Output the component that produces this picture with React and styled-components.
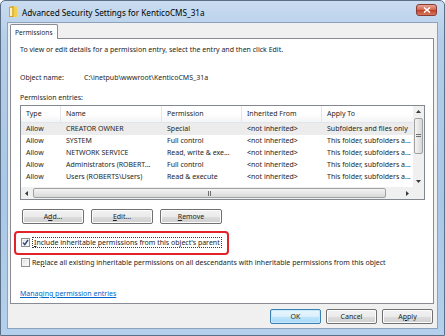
import styled, { createGlobalStyle } from 'styled-components';

const GlobalStyle = createGlobalStyle`
  html, body {
    margin: 0;
    padding: 0;
    background: #ffffff;
  }
  body {
    font-family: "Noto Sans", "Open Sans", sans-serif;
    font-size: 7px;
    color: #1e1e1e;
  }
`;

const entries = [
  { type: 'Allow', name: 'CREATOR OWNER', perm: 'Special', from: '<not inherited>', apply: 'Subfolders and files only' },
  { type: 'Allow', name: 'SYSTEM', perm: 'Full control', from: '<not inherited>', apply: 'This folder, subfolders a...' },
  { type: 'Allow', name: 'NETWORK SERVICE', perm: 'Read, write & exe...', from: '<not inherited>', apply: 'This folder, subfolders a...' },
  { type: 'Allow', name: 'Administrators (ROBERT...', perm: 'Full control', from: '<not inherited>', apply: 'This folder, subfolders a...' },
  { type: 'Allow', name: 'Users (ROBERTS\\Users)', perm: 'Read & execute', from: '<not inherited>', apply: 'This folder, subfolders a...' },
];

function FolderIcon() {
  return (
    <svg width="10" height="13" viewBox="0 0 10 13">
      <path d="M1 2 L5 1 L5 12 L1 12 Z" fill="#d9a520" />
      <path d="M5 1 L9 2 L9 12 L5 12 Z" fill="#f5cf4a" />
      <path d="M2 3 L4.5 2.4 L4.5 11 L2 11 Z" fill="#fff3c0" />
      <path d="M5 1 L5 12" stroke="#b8860b" strokeWidth="0.6" />
    </svg>
  );
}

function CheckMark() {
  return (
    <svg width="7" height="7" viewBox="0 0 7 7">
      <path d="M1 3.6 L2.8 5.6 L6 1" fill="none" stroke="#2b3f78" strokeWidth="1.4" />
    </svg>
  );
}

function Arrow({ dir }) {
  const d = {
    up: 'M0 3 L2.5 0 L5 3 Z',
    down: 'M0 0 L2.5 3 L5 0 Z',
    left: 'M3 0 L0 2.5 L3 5 Z',
    right: 'M0 0 L3 2.5 L0 5 Z',
  }[dir];
  const vertical = dir === 'up' || dir === 'down';
  return (
    <svg width={vertical ? 5 : 3} height={vertical ? 3 : 5} viewBox={vertical ? '0 0 5 3' : '0 0 3 5'}>
      <path d={d} fill="#3a3a3a" />
    </svg>
  );
}

export default function App() {
  return (
    <>
      <GlobalStyle />
      <Window>
        <TitleBar>
          <FolderIcon />
          <Title>Advanced Security Settings for KenticoCMS_31a</Title>
          <CloseButton>
            <svg width="8" height="6" viewBox="0 0 8 6">
              <path d="M1 0.5 L7 5.5 M7 0.5 L1 5.5" stroke="#ffffff" strokeWidth="1.6" />
            </svg>
          </CloseButton>
        </TitleBar>
        <Client>
          <TabStrip>
            <Tab>Permissions</Tab>
          </TabStrip>
          <Panel>
            <Line>To view or edit details for a permission entry, select the entry and then click Edit.</Line>
            <ObjectRow>
              <span>Object name:</span>
              <span>C:\inetpub\wwwroot\KenticoCMS_31a</span>
            </ObjectRow>
            <SectionLabel>Permission entries:</SectionLabel>
            <ListBox>
              <ListContent>
                <HeaderRow>
                  <HeaderCell>Type</HeaderCell>
                  <HeaderCell>Name</HeaderCell>
                  <HeaderCell>Permission</HeaderCell>
                  <HeaderCell>Inherited From</HeaderCell>
                  <HeaderCell $last>Apply To</HeaderCell>
                </HeaderRow>
                {entries.map((e, i) => (
                  <Row key={i} $hot={i === 0}>
                    <Cell>{e.type}</Cell>
                    <Cell>{e.name}</Cell>
                    <Cell>{e.perm}</Cell>
                    <Cell>{e.from}</Cell>
                    <Cell>{e.apply}</Cell>
                  </Row>
                ))}
              </ListContent>
              <VScroll>
                <ScrollArrow><Arrow dir="up" /></ScrollArrow>
                <VTrack>
                  <VThumb>
                    <Grip $vertical />
                  </VThumb>
                </VTrack>
                <ScrollArrow><Arrow dir="down" /></ScrollArrow>
              </VScroll>
              <HScroll>
                <ScrollArrow><Arrow dir="left" /></ScrollArrow>
                <HTrack>
                  <HThumb>
                    <Grip />
                  </HThumb>
                </HTrack>
                <ScrollArrow><Arrow dir="right" /></ScrollArrow>
              </HScroll>
              <Corner />
            </ListBox>
            <ButtonRow>
              <Button>A<u>d</u>d...</Button>
              <Button><u>E</u>dit...</Button>
              <Button><u>R</u>emove</Button>
            </ButtonRow>
            <Highlight>
              <CheckRow>
                <CheckBox><CheckMark /></CheckBox>
                <FocusLabel><u>I</u>nclude inheritable permissions from this object's parent</FocusLabel>
              </CheckRow>
            </Highlight>
            <CheckRow $plain>
              <CheckBox />
              <span>Re<u>p</u>lace all existing inheritable permissions on all descendants with inheritable permissions from this object</span>
            </CheckRow>
            <HelpLink href="#">Managing permission entries</HelpLink>
          </Panel>
          <Footer>
            <Button $wide $default>OK</Button>
            <Button $wide>Cancel</Button>
            <Button $wide>A<u>p</u>ply</Button>
          </Footer>
        </Client>
      </Window>
    </>
  );
}

const Window = styled.div`
  width: 445px;
  height: 336px;
  box-sizing: border-box;
  display: flex;
  flex-direction: column;
  padding: 0 6px 6px 6px;
  background: linear-gradient(180deg, #c9dcf0 0%, #b3cde9 12%, #a9c7e7 60%, #b4d0ec 100%);
  border: 1px solid #5b6f86;
  border-radius: 5px 5px 0 0;
`;

const TitleBar = styled.div`
  height: 21px;
  flex: 0 0 21px;
  display: flex;
  align-items: center;
  gap: 4px;
  padding-left: 1px;
`;

const Title = styled.div`
  flex: 1;
  font-size: 8.2px;
  color: #000000;
  padding-top: 1px;
`;

const CloseButton = styled.div`
  width: 19px;
  height: 10px;
  margin-right: 1px;
  margin-top: -3px;
  display: flex;
  align-items: center;
  justify-content: center;
  border: 1px solid #8a3a33;
  border-radius: 3px;
  background: linear-gradient(180deg, #e8a596 0%, #d56a55 45%, #c0422b 55%, #d57b5e 100%);
`;

const Client = styled.div`
  flex: 1;
  display: flex;
  flex-direction: column;
  background: #f0f0f0;
  border: 1px solid #8da2bc;
  padding: 1px 3px 0 2px;
`;

const TabStrip = styled.div`
  display: flex;
  height: 14px;
`;

const Tab = styled.div`
  width: 48px;
  height: 15px;
  box-sizing: border-box;
  background: #ffffff;
  border: 1px solid #898c95;
  border-bottom: none;
  border-radius: 2px 2px 0 0;
  padding: 3px 0 0 4px;
  font-size: 6.6px;
  position: relative;
  z-index: 1;
`;

const Panel = styled.div`
  height: 266px;
  box-sizing: border-box;
  background: #ffffff;
  border: 1px solid #898c95;
  display: flex;
  flex-direction: column;
  align-items: flex-start;
  padding: 6px 9px 0 9px;
`;

const Line = styled.div`
  height: 10px;
  line-height: 10px;
  white-space: nowrap;
`;

const ObjectRow = styled(Line)`
  margin-top: 18px;
  display: grid;
  grid-template-columns: 64px auto;
`;

const SectionLabel = styled(Line)`
  margin-top: 10px;
`;

const ListBox = styled.div`
  margin-top: 2px;
  width: 405px;
  height: 95px;
  box-sizing: border-box;
  border: 1px solid #828790;
  display: grid;
  grid-template-columns: 1fr 11px;
  grid-template-rows: 1fr 12px;
  overflow: hidden;
`;

const ListContent = styled.div`
  overflow: hidden;
  min-width: 0;
  min-height: 0;
`;

const columns = '40px 101px 80px 80px 1fr';

const HeaderRow = styled.div`
  display: grid;
  grid-template-columns: ${columns};
  height: 16px;
  background: linear-gradient(180deg, #ffffff 0%, #ffffff 50%, #f3f4f6 100%);
  border-bottom: 1px solid #e3e5e9;
`;

const HeaderCell = styled.div`
  padding: 0 0 0 5px;
  line-height: 16px;
  border-right: ${(p) => (p.$last ? 'none' : '1px solid #e3e5e9')};
  white-space: nowrap;
  color: #1e1e1e;
`;

const Row = styled.div`
  display: grid;
  grid-template-columns: ${columns};
  height: 12px;
  line-height: 12px;
  background: ${(p) => (p.$hot ? '#ececec' : 'transparent')};
`;

const Cell = styled.div`
  padding-left: 5px;
  white-space: nowrap;
  overflow: hidden;
`;

const VScroll = styled.div`
  grid-row: 1;
  grid-column: 2;
  display: flex;
  flex-direction: column;
  background: #f0f0f0;
`;

const ScrollArrow = styled.div`
  flex: 0 0 11px;
  display: flex;
  align-items: center;
  justify-content: center;
`;

const VTrack = styled.div`
  flex: 1;
  padding: 1px 1px 0 1px;
`;

const VThumb = styled.div`
  height: 36px;
  box-sizing: border-box;
  border: 1px solid #a1a1a1;
  border-radius: 2px;
  background: linear-gradient(90deg, #f4f4f4 0%, #e6e6e6 50%, #d8d8d8 100%);
  display: flex;
  align-items: center;
  justify-content: center;
`;

const Grip = styled.div`
  width: ${(p) => (p.$vertical ? '5px' : '4px')};
  height: ${(p) => (p.$vertical ? '4px' : '5px')};
  background: ${(p) =>
    p.$vertical
      ? 'repeating-linear-gradient(180deg, #707070 0 1px, transparent 1px 2px)'
      : 'repeating-linear-gradient(90deg, #707070 0 1px, transparent 1px 2px)'};
`;

const HScroll = styled.div`
  grid-row: 2;
  grid-column: 1;
  display: flex;
  background: #f0f0f0;
`;

const HTrack = styled.div`
  flex: 1;
  padding: 1px 16px 1px 1px;
`;

const HThumb = styled.div`
  height: 100%;
  box-sizing: border-box;
  border: 1px solid #a1a1a1;
  border-radius: 2px;
  background: linear-gradient(180deg, #f4f4f4 0%, #e6e6e6 50%, #d8d8d8 100%);
  display: flex;
  align-items: center;
  justify-content: center;
`;

const Corner = styled.div`
  grid-row: 2;
  grid-column: 2;
  background: #f0f0f0;
`;

const ButtonRow = styled.div`
  margin-top: 9px;
  margin-left: 2px;
  display: flex;
  gap: 7px;
`;

const Button = styled.div`
  width: ${(p) => (p.$wide ? '51px' : '62px')};
  height: 15px;
  box-sizing: border-box;
  display: flex;
  align-items: center;
  justify-content: center;
  border: 1px solid ${(p) => (p.$default ? '#3c7fb1' : '#707070')};
  border-radius: 2px;
  background: ${(p) =>
    p.$default
      ? 'linear-gradient(180deg, #eaf6fd 0%, #d9f0fc 50%, #bee6fd 51%, #a7d9f5 100%)'
      : 'linear-gradient(180deg, #f2f2f2 0%, #ebebeb 50%, #dddddd 51%, #cfcfcf 100%)'};
  box-shadow: inset 0 0 0 1px ${(p) => (p.$default ? '#c6e8fb' : '#fcfcfc')};
  color: #1e1e1e;
`;

const Highlight = styled.div`
  margin-top: 7px;
  margin-left: -6px;
  width: 215px;
  height: 24px;
  box-sizing: border-box;
  border: 2px solid #e3232a;
  border-radius: 4px;
  padding: 4px 0 0 5px;
`;

const CheckRow = styled.div`
  display: flex;
  align-items: center;
  gap: 2px;
  height: 11px;
  white-space: nowrap;
  margin-top: ${(p) => (p.$plain ? '2px' : '0')};
  margin-left: ${(p) => (p.$plain ? '1px' : '0')};
`;

const CheckBox = styled.div`
  width: 9px;
  height: 9px;
  flex: 0 0 9px;
  box-sizing: border-box;
  border: 1px solid #8e8f8f;
  background: linear-gradient(135deg, #dcdcdc 0%, #f2f2f2 60%, #ffffff 100%);
  box-shadow: inset 0 0 0 1px #f4f4f4;
  display: flex;
  align-items: center;
  justify-content: center;
`;

const FocusLabel = styled.span`
  border: 1px dotted #3a3a3a;
  padding: 0 1px;
  line-height: 9px;
`;

const HelpLink = styled.a`
  margin-top: 21px;
  color: #0066cc;
  text-decoration: underline;
  line-height: 10px;
`;

const Footer = styled.div`
  flex: 1;
  display: flex;
  justify-content: flex-end;
  align-items: flex-start;
  gap: 5px;
  padding-top: 5px;
  padding-right: 1px;
`;
